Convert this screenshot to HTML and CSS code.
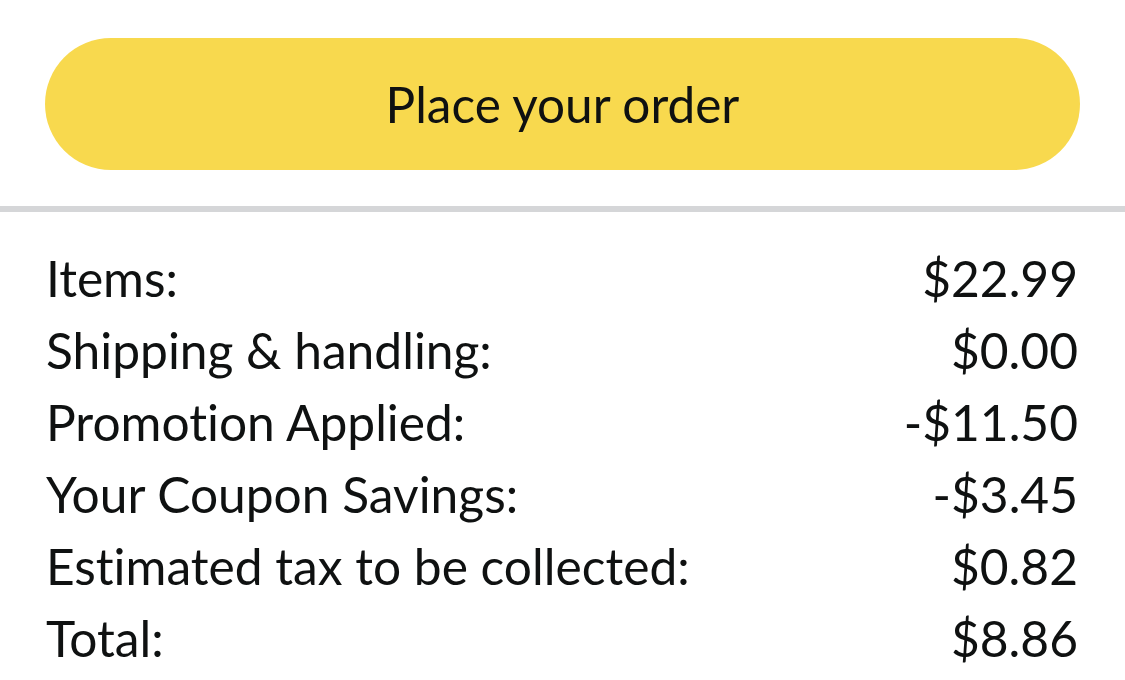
FILE: index.html
```html
<!DOCTYPE html>
<html lang="en">
<head>
<meta charset="utf-8">
<title>Order summary</title>
<link rel="stylesheet" href="styles.css">
</head>
<body>
  <div class="top">
    <button class="place-btn" type="button">Place your order</button>
  </div>
  <hr class="divider">
  <div class="summary">
    <div class="row"><span class="label">Items:</span><span class="value">$22.99</span></div>
    <div class="row"><span class="label">Shipping &amp; handling:</span><span class="value">$0.00</span></div>
    <div class="row"><span class="label">Promotion Applied:</span><span class="value">-$11.50</span></div>
    <div class="row"><span class="label">Your Coupon Savings:</span><span class="value">-$3.45</span></div>
    <div class="row"><span class="label">Estimated tax to be collected:</span><span class="value">$0.82</span></div>
    <div class="row"><span class="label">Total:</span><span class="value">$8.86</span></div>
  </div>
</body>
</html>
```
FILE: styles.css
```css
html, body {
  margin: 0;
  padding: 0;
  background: #ffffff;
}
body {
  font-family: Lato, "Open Sans", sans-serif;
  font-variant-ligatures: none;
  color: #0f1111;
  width: 1125px;
  height: 680px;
  overflow: hidden;
}
.top {
  padding: 38px 45px 0 45px;
}
.place-btn {
  display: block;
  width: 1035px;
  height: 132px;
  border: none;
  border-radius: 66px;
  background: #f8d94e;
  color: #0f1111;
  font-family: inherit;
  font-variant-ligatures: none;
  font-size: 49.5px;
  padding: 0;
  cursor: pointer;
}
.divider {
  margin: 36px 0 0 0;
  height: 6px;
  border: none;
  background: #d5d6d8;
}
.summary {
  padding: 30px 47px 0 46px;
}
.row {
  display: flex;
  justify-content: space-between;
  font-size: 49.7px;
  line-height: 72px;
  height: 72px;
}
```
